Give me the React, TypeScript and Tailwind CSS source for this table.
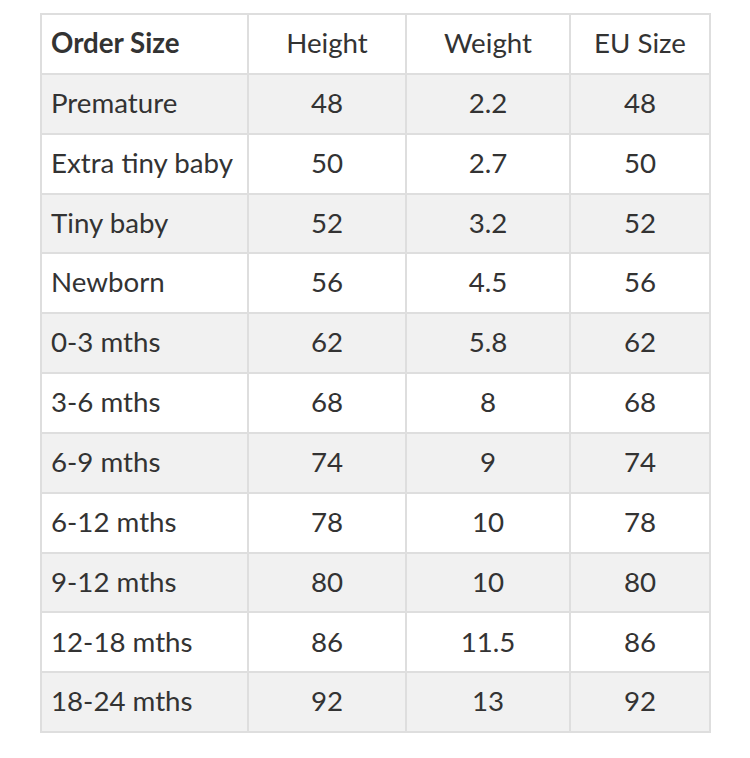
const rows: [string, string, string, string][] = [
  ["Premature", "48", "2.2", "48"],
  ["Extra tiny baby", "50", "2.7", "50"],
  ["Tiny baby", "52", "3.2", "52"],
  ["Newborn", "56", "4.5", "56"],
  ["0-3 mths", "62", "5.8", "62"],
  ["3-6 mths", "68", "8", "68"],
  ["6-9 mths", "74", "9", "74"],
  ["6-12 mths", "78", "10", "78"],
  ["9-12 mths", "80", "10", "80"],
  ["12-18 mths", "86", "11.5", "86"],
  ["18-24 mths", "92", "13", "92"],
];

export default function App() {
  return (
    <div
      className="w-[750px] h-[758px] bg-white pt-[13px] pl-[40px] text-[#333] text-[27.7px] leading-none"
      style={{ fontFamily: "Lato, 'Liberation Sans', sans-serif" }}
    >
      <table className="border-collapse border-2 border-[#dedede] table-fixed w-[669px]">
        <colgroup>
          <col className="w-[207px]" />
          <col className="w-[158px]" />
          <col className="w-[164px]" />
          <col className="w-[140px]" />
        </colgroup>
        <thead>
          <tr className="h-[59.85px] bg-white">
            <th className="border-2 border-[#dedede] text-left font-bold px-[9px] pb-[2px]">Order Size</th>
            <th className="border-2 border-[#dedede] text-center font-normal pb-[2px]">Height</th>
            <th className="border-2 border-[#dedede] text-center font-normal pb-[2px]">Weight</th>
            <th className="border-2 border-[#dedede] text-center font-normal pb-[2px]">EU Size</th>
          </tr>
        </thead>
        <tbody>
          {rows.map((r, i) => (
            <tr key={r[0]} className={i % 2 === 0 ? "h-[59.85px] bg-[#f1f1f1]" : "h-[59.85px] bg-white"}>
              <td className="border-2 border-[#dedede] text-left px-[9px] pb-[2px]">{r[0]}</td>
              <td className="border-2 border-[#dedede] text-center pb-[2px]">{r[1]}</td>
              <td className="border-2 border-[#dedede] text-center pb-[2px]">{r[2]}</td>
              <td className="border-2 border-[#dedede] text-center pb-[2px]">{r[3]}</td>
            </tr>
          ))}
        </tbody>
      </table>
    </div>
  );
}
